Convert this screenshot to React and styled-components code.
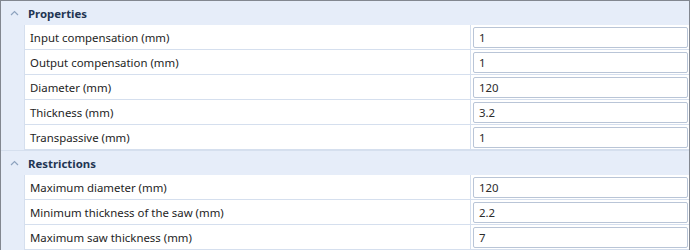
import styled, { createGlobalStyle } from "styled-components";

const GlobalStyle = createGlobalStyle`
  body {
    margin: 0;
    background: #ffffff;
    font-family: "Noto Sans", "Open Sans", sans-serif;
  }
`;

const Grid = styled.div`
  width: 690px;
  box-sizing: border-box;
  border: 1px solid #828790;
  background: #e6edf9;
`;

const Header = styled.div`
  display: flex;
  align-items: center;
  height: 24px;
  background: #e6edf9;
  border-top: ${(props) => (props.first ? "none" : "1px solid #d5dfee")};
`;

const Toggle = styled.div`
  width: 23px;
  display: flex;
  justify-content: center;
  padding-left: 4px;
  box-sizing: border-box;
`;

const HeaderTitle = styled.span`
  margin-left: 4px;
  font-size: 11.4px;
  font-weight: 700;
  color: #1f3553;
`;

const Row = styled.div`
  display: flex;
  height: 25px;
  box-sizing: border-box;
  border-bottom: ${(props) => (props.last ? "none" : "1px solid #d5dfee")};
  background: #ffffff;
  margin-left: 23px;
  border-left: 1px solid #d5dfee;
`;

const Label = styled.div`
  width: 445px;
  display: flex;
  align-items: center;
  padding-left: 5px;
  box-sizing: border-box;
  font-size: 11.4px;
  color: #1e1e1e;
`;

const Value = styled.div`
  flex: 1;
  border-left: 1px solid #d5dfee;
  padding: 2px 1px 0 2px;
`;

const Input = styled.div`
  height: 21px;
  box-sizing: border-box;
  border: 1px solid #b9c5d7;
  border-radius: 2px;
  display: flex;
  align-items: center;
  padding-left: 5px;
  font-size: 11.4px;
  color: #2c2c2c;
  background: #ffffff;
`;

const Caret = () => (
  <svg width="9" height="6" viewBox="0 0 9 6">
    <polyline
      points="1,5 4.5,1.5 8,5"
      fill="none"
      stroke="#8ea3bf"
      strokeWidth="1.2"
    />
  </svg>
);

const sections = [
  {
    title: "Properties",
    rows: [
      ["Input compensation (mm)", "1"],
      ["Output compensation (mm)", "1"],
      ["Diameter (mm)", "120"],
      ["Thickness (mm)", "3.2"],
      ["Transpassive (mm)", "1"],
    ],
  },
  {
    title: "Restrictions",
    rows: [
      ["Maximum diameter (mm)", "120"],
      ["Minimum thickness of the saw (mm)", "2.2"],
      ["Maximum saw thickness (mm)", "7"],
    ],
  },
];

export default function App() {
  return (
    <>
      <GlobalStyle />
      <Grid>
        {sections.map((section, si) => (
          <div key={section.title}>
            <Header first={si === 0}>
              <Toggle>
                <Caret />
              </Toggle>
              <HeaderTitle>{section.title}</HeaderTitle>
            </Header>
            {section.rows.map(([label, value]) => (
              <Row key={label}>
                <Label>{label}</Label>
                <Value>
                  <Input>{value}</Input>
                </Value>
              </Row>
            ))}
          </div>
        ))}
      </Grid>
    </>
  );
}
